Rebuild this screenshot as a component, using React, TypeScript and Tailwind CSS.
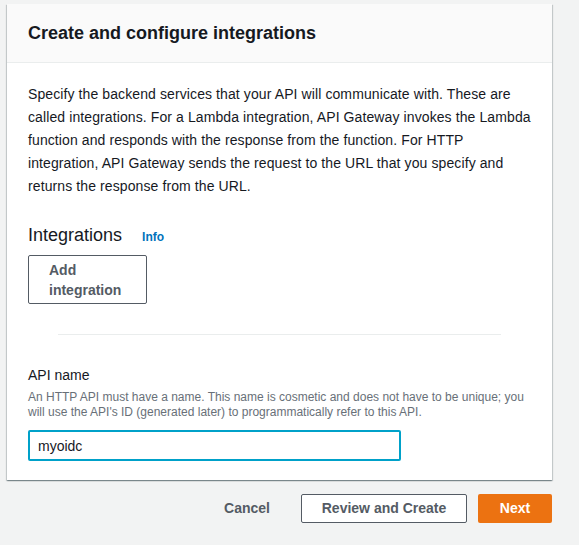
export default function App() {
    return (
        <div
            className="min-h-[545px] bg-[#f2f3f3] pt-[4px] pl-[7px] text-[#16191f]"
            style={{ fontFamily: '"Liberation Sans", Arial, sans-serif' }}
        >
            <div className="w-[545px] bg-white shadow-[0_1px_1px_0_rgba(0,28,36,0.3),1px_1px_1px_0_rgba(0,28,36,0.15),-1px_1px_1px_0_rgba(0,28,36,0.15)]">
                <div className="bg-[#fafafa] border-b border-[#eaeded] px-[21px] py-[18px]">
                    <h2 className="text-[18px] leading-[22px] font-bold">Create and configure integrations</h2>
                </div>

                <div className="px-[21px] pt-[20px] pb-[19px]">
                    <p className="text-[14px] leading-[23px] tracking-[0.1px]">
                        Specify the backend services that your API will communicate with. These are
                        <br />
                        called integrations. For a Lambda integration, API Gateway invokes the Lambda
                        <br />
                        function and responds with the response from the function. For HTTP
                        <br />
                        integration, API Gateway sends the request to the URL that you specify and
                        <br />
                        returns the response from the URL.
                    </p>

                    <div className="mt-[25px] flex items-baseline gap-[20px]">
                        <h3 className="text-[18px] leading-[24px]">Integrations</h3>
                        <a className="text-[12px] font-bold text-[#0073bb]">Info</a>
                    </div>

                    <button className="mt-[8px] w-[119px] border border-[#545b64] rounded-[2px] px-5 py-[3.5px] text-left text-[14px] leading-[20px] font-bold text-[#545b64] bg-white">
                        Add integration
                    </button>

                    <div className="mx-[30px] mt-[30px] border-t border-[#eaeded]" />

                    <div className="mt-[30px]">
                        <label className="block text-[14px] leading-[20px]">API name</label>
                        <p className="mt-[5px] text-[12px] leading-[15px] text-[#687078]">
                            An HTTP API must have a name. This name is cosmetic and does not have to be unique; you
                            will use the API's ID (generated later) to programmatically refer to this API.
                        </p>
                        <input
                            defaultValue="myoidc"
                            className="mt-[10px] block w-[373px] h-[31px] border-2 border-[#00a1c9] rounded-[2px] px-[8px] text-[14px] text-[#16191f] outline-none"
                        />
                    </div>
                </div>
            </div>

            <div className="w-[545px] mt-[14px] flex justify-end items-center gap-[11px]">
                <button className="h-[29px] px-5 text-[14px] font-bold text-[#545b64]">Cancel</button>
                <button className="h-[29px] w-[166px] border border-[#545b64] rounded-[2px] bg-white text-[14px] font-bold text-[#545b64]">
                    Review and Create
                </button>
                <button className="h-[29px] w-[74px] rounded-[2px] bg-[#ec7211] text-[14px] font-bold text-white">
                    Next
                </button>
            </div>
        </div>
    );
}
